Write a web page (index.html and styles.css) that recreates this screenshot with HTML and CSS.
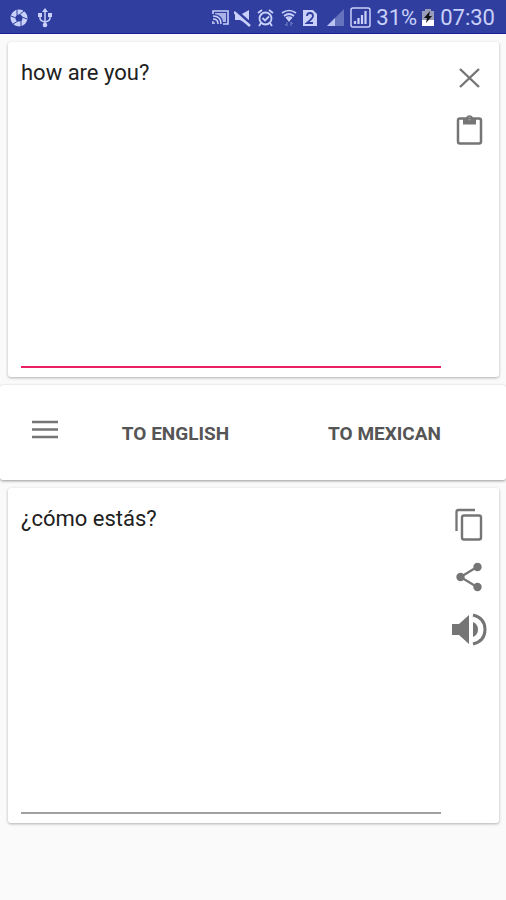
FILE: index.html
```html
<!DOCTYPE html>
<html lang="en">
<head>
<meta charset="utf-8">
<meta name="viewport" content="width=device-width, initial-scale=1">
<title>Translator</title>
<link rel="stylesheet" href="styles.css">
</head>
<body>
<header class="status">
  <div class="status-group status-left">
    <svg width="18" height="18" viewBox="0 0 18 18"><circle cx="9" cy="9" r="6" fill="none" stroke="currentColor" stroke-width="5"/><path d="M9 6 14 2M12 8l5 2M11 11v6M8 12l-5 3M6 9 1 7M7 6 7 1" stroke="#303f9f" stroke-width="1"/></svg>
    <svg width="14" height="20" viewBox="0 0 14 20"><path d="M7 3v14M2 7v3q0 3 5 4M12 7v3q0 3-5 4" fill="none" stroke="currentColor" stroke-width="1.5"/><path d="M7 0l3 4H4zM0 5h4v4H0zM10 5h4v4h-4z" fill="currentColor"/><circle cx="7" cy="17" r="2.3" fill="currentColor"/></svg>
  </div>
  <div class="status-group status-right">
    <svg width="17" height="15" viewBox="0 0 17 15"><path d="M1 4V1h15v13h-5M1 6q8 0 8 8M1 9q5 0 5 5" fill="none" stroke="currentColor" stroke-width="1.6"/><path d="M3 3h11v9h-3Q10 5 3 4zM0 11q3 0 3 3H0z" fill="currentColor" opacity=".8"/></svg>
    <svg width="18" height="18" viewBox="0 0 18 18"><path d="M1 6h5l9-5v15l-9-5H1z" fill="currentColor"/><path d="M1 1l16 14" stroke="#303f9f" stroke-width="3"/><path d="M0 3l16 14" stroke="currentColor" stroke-width="2.500"/></svg>
    <svg width="17" height="18" viewBox="0 0 17 18"><g fill="none" stroke="currentColor" stroke-width="1.8"><circle cx="8.500" cy="9.500" r="6"/><path d="M1 4l4-3M16 4l-4-3M5.500 9l2.500 2.500 4-4M4 14l-2 3M13 14l2 3"/></g></svg>
    <svg class="wifi" width="16" height="18" viewBox="0 0 16 18"><g fill="none" stroke="currentColor" stroke-width="1.7"><path d="M1 4q7-5 14 0M3 7q5-4 10 0M5 9q3-2 6 0"/></g><path d="M5 9h6l-3 4z" fill="currentColor"/><path d="M6 13v4M4 15l2 2M10 17v-4M12 15l-2-2" stroke="currentColor" opacity=".45"/></svg>
    <svg width="16" height="18" viewBox="0 0 16 18"><path d="M1 1h10l4 4v12H1z" fill="currentColor"/><path d="M5 7q0-3 3-3t3 3q0 2-6 7h6" fill="none" stroke="#303f9f" stroke-width="1.800"/></svg>
    <svg class="signal" width="18" height="18" viewBox="0 0 18 18"><path d="M0 17 17 0v17z" fill="currentColor" opacity=".35"/><path d="M0 17l8-8v8z" fill="currentColor" opacity=".85"/></svg>
    <svg width="21" height="21" viewBox="0 0 21 21"><rect x="1" y="1" width="19" height="19" rx="2" fill="none" stroke="currentColor" stroke-width="1.500"/><path d="M5 17v-3M8.500 17v-6M12 17V8M15.500 17V4" stroke="currentColor" stroke-width="2.200"/></svg>
    <span>31%</span>
    <svg width="12" height="18" viewBox="0 0 12 18"><path d="M0 2h3V0h6v2h3v9H0z" fill="#9a9db8"/><path d="M0 11h12v6H0z" fill="#fff"/><path d="M8 2 2 9h3l-1 5 6-7H7z" fill="#111"/></svg>
    <time class="clock">07:30</time>
  </div>
</header>
<main>
  <section class="card">
    <textarea class="field field-active" aria-label="Text to translate" spellcheck="false">how are you?</textarea>
    <div class="actions">
      <button class="icon" aria-label="Clear"><svg width="36" height="36" viewBox="0 0 36 36"><path d="M9 9l19 18M28 9 9 27" fill="none" stroke="currentColor" stroke-width="2.400"/></svg></button>
      <button class="icon" aria-label="Paste"><svg width="36" height="36" viewBox="0 0 36 36"><rect x="7" y="5.500" width="23" height="25" rx="2" fill="none" stroke="currentColor" stroke-width="2.500"/><path fill-rule="evenodd" d="M12 5h3a3.600 3.600 0 0 1 7 0h3v6.500H12zM18.500 3.800a1.700 1.700 0 1 0 0 3.400 1.700 1.700 0 0 0 0-3.400z" fill="currentColor"/></svg></button>
    </div>
  </section>
  <nav class="toolbar">
    <button class="menu" aria-label="Menu"><svg width="26" height="20" viewBox="0 0 26 20"><path d="M0 2h26M0 9.500h26M0 17h26" stroke="currentColor" stroke-width="2.400"/></svg></button>
    <button class="lang">TO ENGLISH</button>
    <button class="lang">TO MEXICAN</button>
  </nav>
  <section class="card">
    <textarea class="field" aria-label="Translation" readonly>¿cómo estás?</textarea>
    <div class="actions">
      <button class="icon" aria-label="Copy"><svg width="36" height="36" viewBox="0 0 36 36"><path d="M5.500 25V6q0-2 2-2H24" fill="none" stroke="currentColor" stroke-width="2.300"/><rect x="11" y="9.500" width="19" height="24" rx="2" fill="none" stroke="currentColor" stroke-width="2.400"/></svg></button>
      <button class="icon" aria-label="Share"><svg width="36" height="36" viewBox="0 0 36 36"><path d="M26 8 9.500 18 26 28" fill="none" stroke="currentColor" stroke-width="2.200"/><g fill="currentColor"><circle cx="26.500" cy="8" r="4.200"/><circle cx="9.500" cy="18" r="4.200"/><circle cx="26.500" cy="28" r="4.200"/></g></svg></button>
      <button class="icon" aria-label="Listen"><svg width="36" height="36" viewBox="0 0 36 36"><path d="M1 12h7l10-9v29L8 23H1zM22 10q5 2 5 7.500T22 25z" fill="currentColor"/><path d="M22 3Q34 6 34 17.500T22 32" fill="none" stroke="currentColor" stroke-width="3"/></svg></button>
    </div>
  </section>
</main>
</body>
</html>
```
FILE: styles.css
```css
* { box-sizing: border-box; }

body {
  margin: 0;
  min-height: 100vh;
  background: #fafafa;
  color: #212121;
  font-family: Roboto, "Liberation Sans", sans-serif;
}

button {
  margin: 0;
  padding: 0;
  border: 0;
  background: none;
  font: inherit;
  cursor: pointer;
}

svg { display: block; flex: none; }

.status {
  display: flex;
  justify-content: space-between;
  align-items: center;
  height: 34px;
  padding: 2px 11px 0 10px;
  background: #303f9f;
  border-bottom: 1px solid #1a1f96;
  color: #c9d0fa;
  font-size: 22px;
  line-height: 32px;
}

.status-group { display: flex; align-items: center; }
.status-left { gap: 10px; }
.status-right { gap: 5px; }
.wifi { margin-left: 2px; }
.signal { margin-left: 4px; }
.clock { margin-left: 1px; }

main {
  display: flex;
  flex-direction: column;
  gap: 8px;
  padding-top: 8px;
}

.card {
  display: flex;
  margin: 0 7px 0 8px;
  padding: 2px 12px 9px 13px;
  border-radius: 3px;
  background: #fff;
  box-shadow: 0 1px 3px rgba(0, 0, 0, .3);
}

.field {
  flex: 1;
  min-width: 0;
  height: 36vh;
  margin: 0;
  padding: 16px 0 0;
  border: 0;
  border-bottom: 2px solid #a0a0a0;
  border-radius: 0;
  outline: 0;
  resize: none;
  background: none;
  color: inherit;
  font: inherit;
  font-size: 22px;
  line-height: 26px;
}

.field-active { border-bottom: 2px solid #e91e63; }

.actions {
  display: flex;
  flex-direction: column;
  gap: 17px;
  margin-left: 10px;
  padding-top: 16px;
}

.icon { color: #757575; }

.toolbar {
  display: flex;
  align-items: stretch;
  height: 95px;
  padding: 2px 17px 0 0;
  border-radius: 3px;
  background: #fff;
  box-shadow: 0 1px 3px rgba(0, 0, 0, .4);
}

.menu {
  display: flex;
  align-items: center;
  width: 71px;
  padding: 0 0 8px 32px;
  color: #757575;
}

.lang {
  flex: 1;
  color: #555;
  font-size: 19px;
  font-weight: 700;
}
```
